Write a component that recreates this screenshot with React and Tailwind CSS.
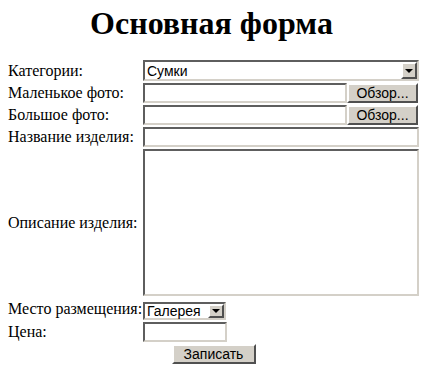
const inset =
  'border-2 border-t-[#5e5e5e] border-l-[#5e5e5e] border-b-[#d4d0c8] border-r-[#d4d0c8] bg-white';
const outset =
  'border-2 border-t-white border-l-white border-b-[#505050] border-r-[#505050] bg-[#d4d0c8]';

function DropArrow() {
  return (
    <div className={`${outset} w-[16px] h-full flex items-center justify-center`}>
      <div className="w-0 h-0 border-l-[4px] border-r-[4px] border-t-[4px] border-l-transparent border-r-transparent border-t-black" />
    </div>
  );
}

function FakeSelect({ value, className }) {
  return (
    <div className={`${inset} flex items-stretch ${className}`}>
      <div className="flex-1 pl-[2px] flex items-center text-[14px] leading-none text-black">{value}</div>
      <DropArrow />
    </div>
  );
}

function Label({ children }) {
  return (
    <div className="font-['Liberation_Serif',serif] text-[16px] leading-[18px] text-black whitespace-nowrap">
      {children}
    </div>
  );
}

export default function App() {
  return (
    <div className="w-[423px] h-[369px] bg-white overflow-hidden font-['Liberation_Serif',serif]">
      <h1 className="text-[32px] font-bold text-center leading-[37px] mt-[5px] mb-[18px] text-black">
        Основная форма
      </h1>
      <form
        className="ml-[8px] grid grid-cols-[135px_276px] gap-y-[2px] items-center font-['Liberation_Sans',sans-serif]"
        onSubmit={(e) => e.preventDefault()}
      >
        <Label>Категории:</Label>
        <FakeSelect value="Сумки" className="h-[21px] w-[276px]" />

        <Label>Маленькое фото:</Label>
        <div className="flex h-[20px]">
          <input type="text" className={`${inset} w-[204px] h-[20px] outline-none`} />
          <button type="button" className={`${outset} w-[71px] h-[20px] text-[14px] leading-none text-black`}>
            Обзор...
          </button>
        </div>

        <Label>Большое фото:</Label>
        <div className="flex h-[20px]">
          <input type="text" className={`${inset} w-[204px] h-[20px] outline-none`} />
          <button type="button" className={`${outset} w-[71px] h-[20px] text-[14px] leading-none text-black`}>
            Обзор...
          </button>
        </div>

        <Label>Название изделия:</Label>
        <input type="text" className={`${inset} w-[276px] h-[20px] outline-none`} />

        <Label>Описание изделия:</Label>
        <textarea className={`${inset} w-[276px] h-[147px] resize-none outline-none`} />

        <Label>Место размещения:</Label>
        <FakeSelect value="Галерея" className="h-[18px] w-[83px] mt-[4px]" />

        <Label>Цена:</Label>
        <input type="text" className={`${inset} w-[84px] h-[20px] outline-none`} />

        <div className="col-span-2 flex justify-center">
          <button type="submit" className={`${outset} w-[84px] h-[20px] text-[14px] leading-none text-black`}>
            Записать
          </button>
        </div>
      </form>
    </div>
  );
}
